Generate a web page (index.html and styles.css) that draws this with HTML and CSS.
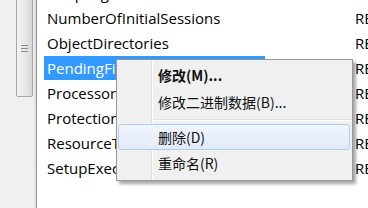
FILE: index.html
```html
<!DOCTYPE html>
<html>
    <head>
        <title>Session Manager</title>
        <link rel="stylesheet" href="styles.css">
    </head>
    <body>
        <div class="frame">
            <div class="scroll">
                <div class="thumb"><span class="grip"></span></div>
            </div>
            <div class="list">
                <div class="rows">
                    <div class="row"><span class="name"><span class="label">HeapSegmentReserve</span></span><span class="type">REG_DWORD</span></div>
                    <div class="row"><span class="name"><span class="label">NumberOfInitialSessions</span></span><span class="type">REG_DWORD</span></div>
                    <div class="row"><span class="name"><span class="label">ObjectDirectories</span></span><span class="type">REG_MULTI_SZ</span></div>
                    <div class="row"><span class="name"><span class="label sel">PendingFileRenameOperations</span></span><span class="type">REG_MULTI_SZ</span></div>
                    <div class="row"><span class="name"><span class="label">ProcessorControl</span></span><span class="type">REG_DWORD</span></div>
                    <div class="row"><span class="name"><span class="label">ProtectionMode</span></span><span class="type">REG_DWORD</span></div>
                    <div class="row"><span class="name"><span class="label">ResourceTimeoutCount</span></span><span class="type">REG_DWORD</span></div>
                    <div class="row"><span class="name"><span class="label">SetupExecute</span></span><span class="type">REG_MULTI_SZ</span></div>
                </div>
            </div>
        </div>
        <!-- context menu over the list -->
        <div class="menu">
            <div class="item bold">修改(M)...</div>
            <div class="item">修改二进制数据(B)...</div>
            <div class="sep"></div>
            <div class="item hover">删除(D)</div>
            <div class="item">重命名(R)</div>
        </div>
    </body>
</html>
```

FILE: styles.css
```css
body {
	margin: 0;
	width: 368px;
	height: 208px;
	overflow: hidden;
	background: #ffffff;
	position: relative;
}
.frame {
	display: flex;
	height: 208px;
}
.scroll {
	width: 36px;
	flex: none;
	background: #f0f0f0;
	border-right: 1px solid #8e8f8f;
	box-shadow: inset -2px 0 0 #e3e3e3;
}
.thumb {
	margin: -4px 0 0 16px;
	width: 15px;
	height: 99px;
	border: 1px solid #a6a6a6;
	border-radius: 2px;
	background: linear-gradient(to right, #f3f3f3, #e6e6e6 60%, #d6d6d6);
	display: flex;
	align-items: center;
	justify-content: center;
}
.grip {
	display: block;
	width: 7px;
	height: 8px;
	background: repeating-linear-gradient(to bottom, #8b8b8b 0, #8b8b8b 1px, transparent 1px, transparent 3px);
	margin-top: 4px;
}
.list {
	flex: 1;
	overflow: hidden;
	font-family: "Open Sans", sans-serif;
	font-size: 15px;
	color: #000;
}
.rows {
	margin-top: -20px;
}
.row {
	display: flex;
	height: 25px;
	align-items: center;
	white-space: nowrap;
}
.name {
	width: 311px;
	flex: none;
	padding-left: 7px;
}
.label {
	display: inline-block;
	padding: 0 2px 0 3px;
	line-height: 24px;
}
.label.sel {
	background: #3399ff;
	color: #fff;
}
.type {
	flex: none;
}
.menu {
	position: absolute;
	left: 116px;
	top: 59px;
	width: 235px;
	padding: 2px 0 4px 0;
	border: 1px solid #979797;
	background: #f0f0f0 linear-gradient(to right, transparent 34px, #e2e3e3 34px, #e2e3e3 35px, #ffffff 35px, #ffffff 36px, transparent 36px);
	box-shadow: 3px 3px 3px rgba(0, 0, 0, 0.35);
	font-family: "Noto Sans CJK SC", sans-serif;
	font-size: 14px;
	color: #111;
}
.item {
	height: 24px;
	line-height: 24px;
	padding-left: 39px;
	margin: 0 2px 0 1px;
	border: 1px solid transparent;
	border-radius: 3px;
	white-space: nowrap;
}
.bold {
	font-weight: bold;
	height: 25px;
	line-height: 25px;
}
.hover {
	border-color: #b1cdef;
	background: linear-gradient(to bottom, #f0f5fc, #e1ebf8);
}
.sep {
	height: 1px;
	margin: 4px 0 3px 36px;
	background: #e0e0e0;
	border-bottom: 1px solid #ffffff;
}
```
